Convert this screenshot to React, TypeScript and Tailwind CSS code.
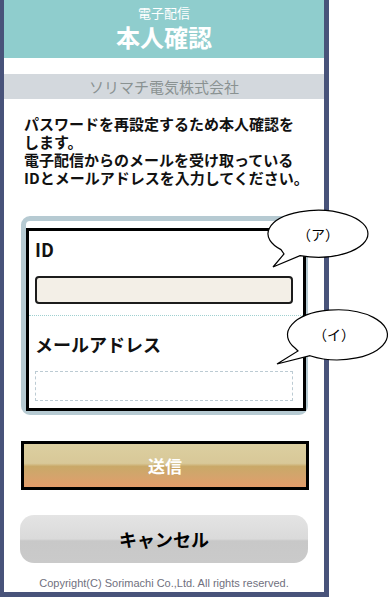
import React from 'react';

const jp = { fontFamily: '"Noto Sans CJK JP", "Noto Sans", sans-serif' };

function Bubbles() {
    return (
        <svg
            className="absolute left-0 top-0 pointer-events-none"
            width={391}
            height={598}
            viewBox="0 0 391 598"
        >
            {/* (ア) */}
            <path
                d="M 281 249.6 L 284 254 L 273 267 L 300 255.7 A 50 23.5 0 1 0 281 249.6 Z"
                fill="#ffffff"
                stroke="#000000"
                strokeWidth={1.2}
            />
            <text x={318} y={240} fontSize={14} textAnchor="middle" fill="#000" style={jp}>
                （ア）
            </text>
            {/* (イ) */}
            <path
                d="M 295 348 L 298 351 L 277 364 L 310 355.7 A 50 25 0 1 0 295 348 Z"
                fill="#ffffff"
                stroke="#000000"
                strokeWidth={1.2}
            />
            <text x={334} y={340} fontSize={14} textAnchor="middle" fill="#000" style={jp}>
                （イ）
            </text>
        </svg>
    );
}

export default function App() {
    return (
        <div className="relative w-[391px] h-[598px] bg-white overflow-hidden" style={jp}>
            <div className="w-[329px] border-l-4 border-r-[5px] border-b-[5px] border-[#48537a] bg-white">
                {/* Header */}
                <div className="h-[58px] bg-[#8fcdcd] flex flex-col items-center text-white">
                    <div className="mt-[5px] text-[13px] leading-[16px]">電子配信</div>
                    <div className="mt-[2px] text-[24px] leading-[28px] font-bold">本人確認</div>
                </div>

                {/* Company bar */}
                <div className="mt-4 h-[25px] bg-[#d3d8dd] text-center text-[15px] leading-[25px] text-[#8a9292]">
                    ソリマチ電気株式会社
                </div>

                {/* Message */}
                <p className="mt-[16px] px-5 text-[15px] leading-[18px] font-bold text-[#111] whitespace-nowrap">
                    パスワードを再設定するため本人確認を
                    <br />
                    します。
                    <br />
                    電子配信からのメールを受け取っている
                    <br />
                    IDとメールアドレスを入力してください。
                </p>

                {/* Form */}
                <div className="mt-[29px] ml-[17px] w-[287px] h-[199px] border-[5px] border-[#b6cad2] rounded-[9px] pt-[7px]">
                    <div className="-mr-[3px] border-[3px] border-black bg-white flex flex-col pl-[6px] pr-[10px] pt-[6px] pb-[7px]">
                        <div className="text-[18px] leading-[24px] font-bold text-[#111]">ID</div>
                        <div className="mt-[15px] h-[28px] rounded-[4px] border-2 border-[#1c1c1c] bg-[#f3efe7]" />
                        <div className="mt-[11px] -ml-[6px] -mr-[10px] border-t border-dotted border-[#9fd0d0]" />
                        <div className="mt-[16px] text-[18px] leading-[24px] font-bold text-[#111]">メールアドレス</div>
                        <div className="mt-[15px] h-[30px] border border-dashed border-[#bccbd3] bg-white" />
                    </div>
                </div>

                {/* Submit */}
                <button
                    type="button"
                    className="mt-[26px] ml-[17px] w-[288px] h-[49px] border-[3px] border-black bg-[linear-gradient(to_bottom,#dccfa0_0%,#d8c898_45%,#c9a968_52%,#d4a46c_75%,#e39c6a_100%)] text-white text-[17px] font-bold"
                >
                    送信
                </button>

                {/* Cancel */}
                <button
                    type="button"
                    className="block mt-[25px] ml-4 w-[288px] h-[48px] rounded-[14px] bg-[linear-gradient(to_bottom,#e4e4e4_0%,#dadada_50%,#c8c8c8_54%,#cacaca_100%)] text-black text-[18px] font-bold"
                >
                    キャンセル
                </button>

                {/* Footer */}
                <div
                    className="mt-[13px] pb-[2px] text-center text-[11px] leading-[14px] text-[#70707e]"
                    style={{ fontFamily: '"Liberation Sans", Arial, sans-serif' }}
                >
                    Copyright(C) Sorimachi Co.,Ltd. All rights reserved.
                </div>
            </div>

            <Bubbles />
        </div>
    );
}
